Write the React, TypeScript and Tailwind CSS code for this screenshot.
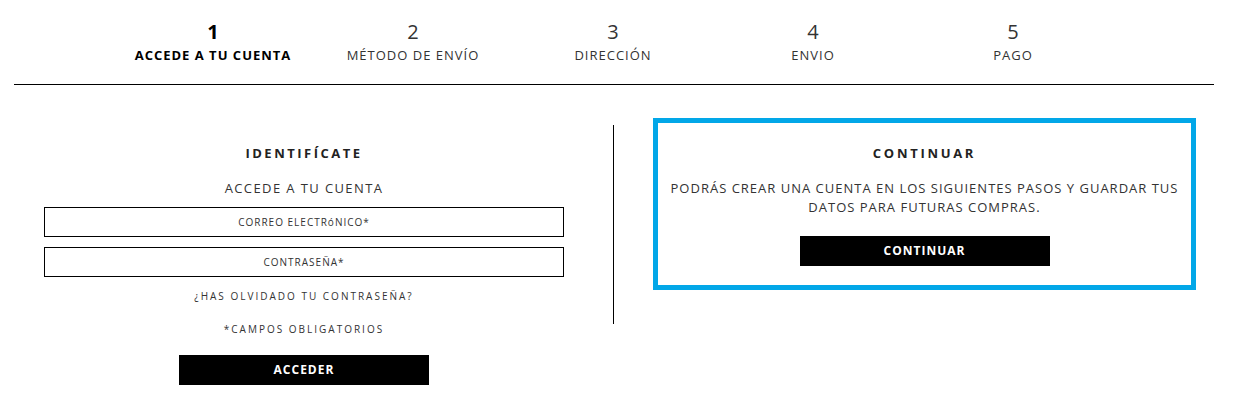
const steps = [
  { n: "1", label: "ACCEDE A TU CUENTA", active: true },
  { n: "2", label: "MÉTODO DE ENVÍO" },
  { n: "3", label: "DIRECCIÓN" },
  { n: "4", label: "ENVIO" },
  { n: "5", label: "PAGO" },
];

export default function App() {
  return (
    <main
      className="min-h-screen bg-white text-[#333]"
      style={{ fontFamily: '"Open Sans", "Noto Sans", sans-serif' }}
    >
      <div className="ml-[14px] w-[1200px]">
        {/* checkout steps */}
        <div className="flex pl-[99px] pt-[19px] pb-[19px] border-b border-black">
          {steps.map((s) => (
            <div key={s.n} className="w-[200px] flex flex-col items-center">
              <span
                className={`text-[20px] leading-[26px] ${s.active ? "font-bold text-black" : "text-[#333]"}`}
              >
                {s.n}
              </span>
              <span
                className={`text-[13px] leading-[20px] tracking-[1px] ${s.active ? "font-bold text-black" : "text-[#333]"}`}
              >
                {s.label}
              </span>
            </div>
          ))}
        </div>

        <div className="flex mt-[33px]">
          {/* login */}
          <div className="ml-[30px] w-[520px] flex flex-col items-center pt-[25px]">
            <h2 className="text-[13px] font-bold tracking-[2.5px] leading-[20px] text-[#222]">
              IDENTIFÍCATE
            </h2>
            <p className="mt-[15px] text-[13px] tracking-[1.4px] leading-[20px]">
              ACCEDE A TU CUENTA
            </p>
            <div className="mt-[9px] w-full h-[30px] border border-black flex items-center justify-center text-[10px] tracking-[1px]">
              CORREO ELECTRóNICO*
            </div>
            <div className="mt-[10px] w-full h-[30px] border border-black flex items-center justify-center text-[10px] tracking-[1px]">
              CONTRASEÑA*
            </div>
            <a className="mt-[11px] text-[10px] tracking-[2px] leading-[16px]">
              ¿HAS OLVIDADO TU CONTRASEÑA?
            </a>
            <p className="mt-[17px] text-[10px] tracking-[2px] leading-[16px]">
              *CAMPOS OBLIGATORIOS
            </p>
            <button className="mt-[18px] w-[250px] h-[30px] bg-black text-white text-[12px] font-bold tracking-[1px]">
              ACCEDER
            </button>
          </div>

          {/* divider */}
          <div className="ml-[49px] mt-[7px] w-px h-[199px] bg-black" />

          {/* guest */}
          <div className="ml-[39px] w-[543px] h-[172px] border-[5px] border-[#02a7e8] flex flex-col items-center pt-[20px]">
            <h2 className="text-[13px] font-bold tracking-[2.7px] leading-[20px] text-[#222]">
              CONTINUAR
            </h2>
            <p className="mt-[16px] text-[13px] tracking-[1px] leading-[19px] text-center px-[10px]">
              PODRÁS CREAR UNA CUENTA EN LOS SIGUIENTES PASOS Y GUARDAR TUS DATOS PARA FUTURAS COMPRAS.
            </p>
            <button className="mt-[19px] w-[250px] h-[30px] bg-black text-white text-[12px] font-bold tracking-[1px]">
              CONTINUAR
            </button>
          </div>
        </div>
      </div>
    </main>
  );
}
